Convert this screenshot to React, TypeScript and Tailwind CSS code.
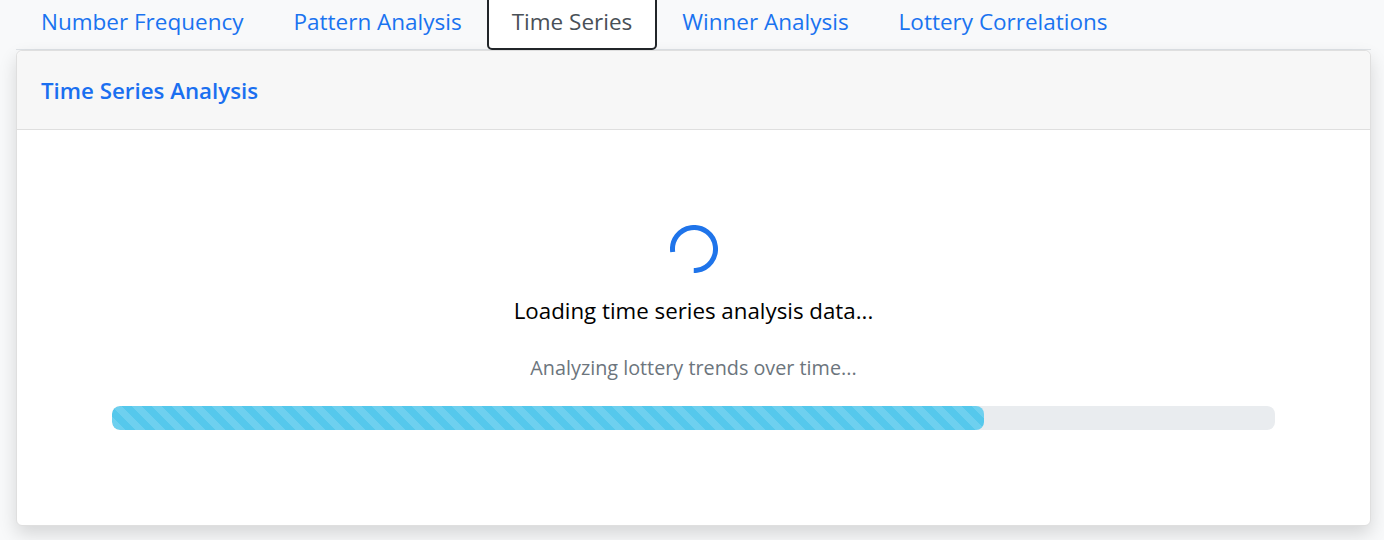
const tabs = ['Number Frequency', 'Pattern Analysis', 'Time Series', 'Winner Analysis', 'Lottery Correlations'];
const activeTab = 'Time Series';

function Spinner() {
    // open arc, gap on the lower left
    return (
        <svg width="48" height="48" viewBox="0 0 48 48">
            <circle
                cx="24"
                cy="24"
                r="21.5"
                fill="none"
                stroke="#1f74ea"
                strokeWidth="5"
                strokeDasharray="104 31"
                transform="rotate(172 24 24)"
            />
        </svg>
    );
}

export default function App() {
    return (
        <div className="min-h-screen overflow-hidden bg-[#f8f9fa] font-['Open_Sans',sans-serif]">
            <div className="pl-4 pr-[13px]">
                <ul className="flex -mt-[8px] border-b border-[#dee2e6]">
                    {tabs.map((tab) => (
                        <li key={tab} className="-mb-px">
                            <button
                                className={
                                    tab === activeTab
                                        ? 'px-[23px] pt-[13px] pb-[11px] text-[22.5px] leading-[30px] text-[#495057] bg-white border-2 border-[#212529] rounded-[5px]'
                                        : 'px-[23px] pt-[13px] pb-[11px] text-[22.5px] leading-[30px] text-[#1a73f0] border-2 border-transparent'
                                }
                            >
                                {tab}
                            </button>
                        </li>
                    ))}
                </ul>

                <div className="bg-white border border-[#dfdfdf] rounded-md shadow-[0_8px_18px_rgba(0,0,0,0.14)]">
                    <div className="bg-[#f7f7f7] border-b border-[#dfdfdf] rounded-t-md px-6 pt-[25px] pb-[23px]">
                        <h5 className="text-[22.3px] leading-[30px] font-semibold text-[#1a6ff0]">Time Series Analysis</h5>
                    </div>
                    <div className="flex flex-col items-center pt-[95px] pb-[95px] px-[95px]">
                        <Spinner />
                        <p className="mt-[23px] text-[22.3px] leading-[30px] text-black">Loading time series analysis data...</p>
                        <p className="mt-[29px] text-[19.8px] leading-[26px] text-[#6c757d]">Analyzing lottery trends over time...</p>
                        <div className="mt-[25px] w-full h-6 bg-[#e9ecef] rounded-[8px] overflow-hidden">
                            <div className="w-3/4 h-full rounded-[8px] bg-[#55c8ec] bg-[linear-gradient(45deg,rgba(255,255,255,.15)_25%,transparent_25%,transparent_50%,rgba(255,255,255,.15)_50%,rgba(255,255,255,.15)_75%,transparent_75%,transparent)] bg-[length:20px_20px]" />
                        </div>
                    </div>
                </div>
            </div>
        </div>
    );
}
